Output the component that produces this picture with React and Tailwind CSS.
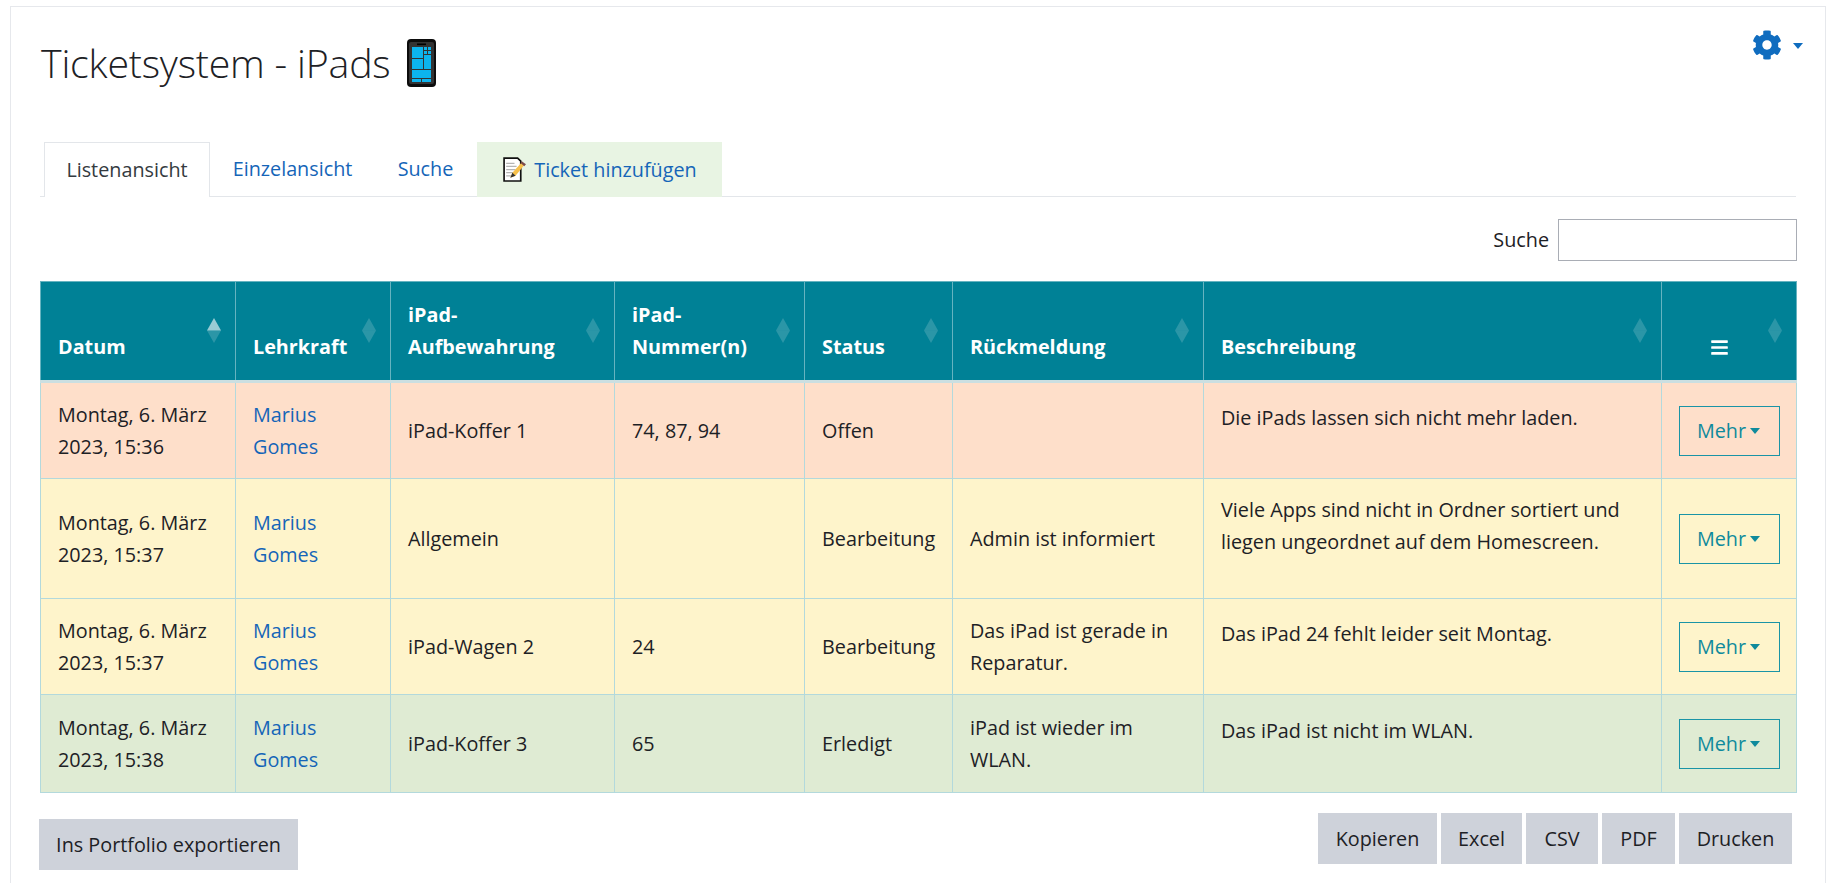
import React from 'react';
import { FaCog, FaBars } from 'react-icons/fa';

const cols = [195, 155, 224, 190, 148, 251, 458, 135];
const heads = [
  [['Datum'], true], [['Lehrkraft']], [['iPad-', 'Aufbewahrung']], [['iPad-', 'Nummer(n)']],
  [['Status']], [['Rückmeldung']], [['Beschreibung']],
];
const rows = [
  { h: 'h-[97px]', bg: 'bg-[#fedfca]', d: '15:36', o: 'iPad-Koffer 1', n: '74, 87, 94', s: 'Offen', r: '', b: ['Die iPads lassen sich nicht mehr laden.'] },
  { h: 'h-[120px]', bg: 'bg-[#fef4cb]', d: '15:37', o: 'Allgemein', n: '', s: 'Bearbeitung', r: 'Admin ist informiert', b: ['Viele Apps sind nicht in Ordner sortiert und', 'liegen ungeordnet auf dem Homescreen.'] },
  { h: 'h-[96px]', bg: 'bg-[#fef4cb]', d: '15:37', o: 'iPad-Wagen 2', n: '24', s: 'Bearbeitung', r: 'Das iPad ist gerade in Reparatur.', b: ['Das iPad 24 fehlt leider seit Montag.'] },
  { h: 'h-[98px]', bg: 'bg-[#dfebd3]', d: '15:38', o: 'iPad-Koffer 3', n: '65', s: 'Erledigt', r: 'iPad ist wieder im WLAN.', b: ['Das iPad ist nicht im WLAN.'] },
];

function Diamond({ active }) {
  return (
    <svg width="14" height="25" viewBox="0 0 14 25" className="absolute top-[36px] right-[14px]">
      <polygon points="7,0 14,12.5 0,12.5" fill="#fff" fillOpacity={active ? 0.6 : 0.17} />
      <polygon points="0,12.5 14,12.5 7,25" fill="#fff" fillOpacity="0.17" />
    </svg>
  );
}

function Phone() {
  return (
    <svg width="29" height="48" viewBox="0 0 29 48" className="shrink-0">
      <rect x="0" y="0" width="29" height="48" rx="4" fill="#0c0c0c" />
      <rect x="2" y="3" width="25" height="42" rx="2" fill="#333" />
      <rect x="10" y="4.5" width="9" height="1.6" fill="#000" />
      <g fill="#0cb4ee">
        <rect x="5" y="8" width="11" height="11" />
        <rect x="17" y="8" width="3" height="3" /><rect x="21" y="8" width="3" height="3" />
        <rect x="17" y="12" width="3" height="3" /><rect x="21" y="12" width="3" height="3" />
        <rect x="5" y="20" width="11" height="10" />
        <rect x="17" y="16" width="7" height="14" />
        <rect x="5" y="31" width="19" height="8" />
        <rect x="5" y="40" width="9" height="3" /><rect x="15" y="40" width="9" height="3" />
      </g>
    </svg>
  );
}

function Memo() {
  return (
    <svg width="25" height="25" viewBox="0 0 24 24" className="shrink-0">
      <path d="M2 1h13l3 3v19H2z" fill="#fff" stroke="#111" strokeWidth="1.6" />
      <g stroke="#b5b5b5" strokeWidth="1.2">
        <path d="M4 6h8M4 9h10M4 12h9M4 15h7M4 18h6" />
      </g>
      <path d="M8 20l2-5L19 5l3 2-9 11z" fill="#f7c04a" />
      <path d="M19 4l4 3-1.6 1.8-3.6-3z" fill="#7a4a4a" />
      <path d="M8 20l2-5 3 3z" fill="#333" />
    </svg>
  );
}

function Caret({ color = 'border-t-[#0f6cbf]' }) {
  return <span className={`inline-block w-0 h-0 border-x-[5px] border-x-transparent border-t-[6px] ${color}`} />;
}

export default function App() {
  return (
    <div className="h-[883px] overflow-hidden bg-white pt-[6px] pl-[10px] text-[#1d2125] text-[19.8px] leading-[32px]" style={{ fontFamily: '"Open Sans", "Noto Sans", sans-serif' }}>
      <div className="w-[1816px] h-[900px] border border-[#e6e8ec] px-[29px] pt-[32px]">
        <div className="flex justify-between h-[48px]">
          <div className="flex items-center">
            <h1 className="text-[39.3px] leading-[48px] font-light ml-[1px] tracking-[-0.2px] text-[#1d2125]">Ticketsystem - iPads</h1>
            <span className="ml-[17px]"><Phone /></span>
          </div>
          <div className="flex items-start -mr-[7px] -mt-[9px] gap-[11px] text-[#0f6cbf]">
            <FaCog className="w-[30px] h-[30px]" />
            <span className="mt-[13px] leading-none flex"><Caret /></span>
          </div>
        </div>

        <ul className="mt-[55px] flex h-[55px] border-b border-[#e3e6ea] pl-[4px]">
          <li className="w-[166px] h-[55px] border border-b-0 border-[#e3e6ea] bg-white flex items-center justify-center text-[#343a40]">Listenansicht</li>
          <li className="w-[165px] flex items-center justify-center h-[54px] text-[#1565b8]">Einzelansicht</li>
          <li className="w-[101px] flex items-center justify-center h-[54px] text-[#1565b8]">Suche</li>
          <li className="ml-[1px] w-[245px] h-[55px] bg-[#e8f4e3] flex items-center justify-center gap-[7px] text-[#1565b8]"><Memo />Ticket hinzufügen</li>
        </ul>

        <div className="mt-[22px] flex justify-end items-center gap-[9px] h-[42px] -mr-[1px]">
          <label>Suche</label>
          <input className="w-[239px] h-[42px] border border-[#a9adb5] bg-white" />
        </div>

        <table className="mt-[20px] table-fixed border-collapse w-[1756px]">
          <colgroup>
            {cols.map((c, i) => <col key={i} style={{ width: c }} />)}
          </colgroup>
          <thead>
            <tr className="h-[100px] bg-[#008196] text-white font-bold">
              {heads.map(([lines, active], i) => (
                <th key={i} className="relative align-bottom text-left pl-[17px] pr-0 pb-[17px] font-bold border border-[#66b3c0] border-b-[3px] border-b-[#cbdfe1]">
                  {lines.map((l) => <div key={l}>{l}</div>)}
                  <Diamond active={active} />
                </th>
              ))}
              <th className="relative align-bottom text-left pl-[48px] pb-[23px] border border-[#66b3c0] border-b-[3px] border-b-[#cbdfe1]">
                <FaBars className="w-[19px] h-[19px]" />
                <Diamond />
              </th>
            </tr>
          </thead>
          <tbody>
            {rows.map((r, i) => (
              <tr key={i} className={`${r.h} ${r.bg}`}>
                <td className="border border-[#b3d9dc] pl-[17px] pr-0 py-0 align-middle whitespace-nowrap">Montag, 6. März<br />2023, {r.d}</td>
                <td className="border border-[#b3d9dc] pl-[17px] pr-[40px] py-0 align-middle text-[#1565b8]">Marius Gomes</td>
                <td className="border border-[#b3d9dc] pl-[17px] py-0 align-middle">{r.o}</td>
                <td className="border border-[#b3d9dc] pl-[17px] py-0 align-middle">{r.n}</td>
                <td className="border border-[#b3d9dc] pl-[17px] py-0 align-middle whitespace-nowrap">{r.s}</td>
                <td className="border border-[#b3d9dc] pl-[17px] pr-[10px] py-0 align-middle">{r.r}</td>
                <td className="border border-[#b3d9dc] pl-[17px] py-0 align-middle">
                  <div className="pb-[25px]">{r.b.map((l) => <div key={l} className="whitespace-nowrap">{l}</div>)}</div>
                </td>
                <td className="border border-[#b3d9dc] pl-[17px] py-0 align-middle">
                  <button className="w-[101px] h-[50px] border border-[#1a94a6] text-[#0f8a9c] flex items-center justify-center gap-[4px] pr-[2px]">Mehr<Caret color="border-t-[#0f8a9c]" /></button>
                </td>
              </tr>
            ))}
          </tbody>
        </table>

        <div className="mt-[20px] flex justify-between items-start -ml-[1px] pr-[4px]">
          <button className="mt-[6px] w-[259px] h-[51px] bg-[#ced2da]">Ins Portfolio exportieren</button>
          <div className="flex gap-[4px]">
            <button className="w-[119px] h-[51px] bg-[#ced2da]">Kopieren</button>
            <button className="w-[81px] h-[51px] bg-[#ced2da]">Excel</button>
            <button className="w-[72px] h-[51px] bg-[#ced2da]">CSV</button>
            <button className="w-[73px] h-[51px] bg-[#ced2da]">PDF</button>
            <button className="w-[113px] h-[51px] bg-[#ced2da]">Drucken</button>
          </div>
        </div>
      </div>
    </div>
  );
}
